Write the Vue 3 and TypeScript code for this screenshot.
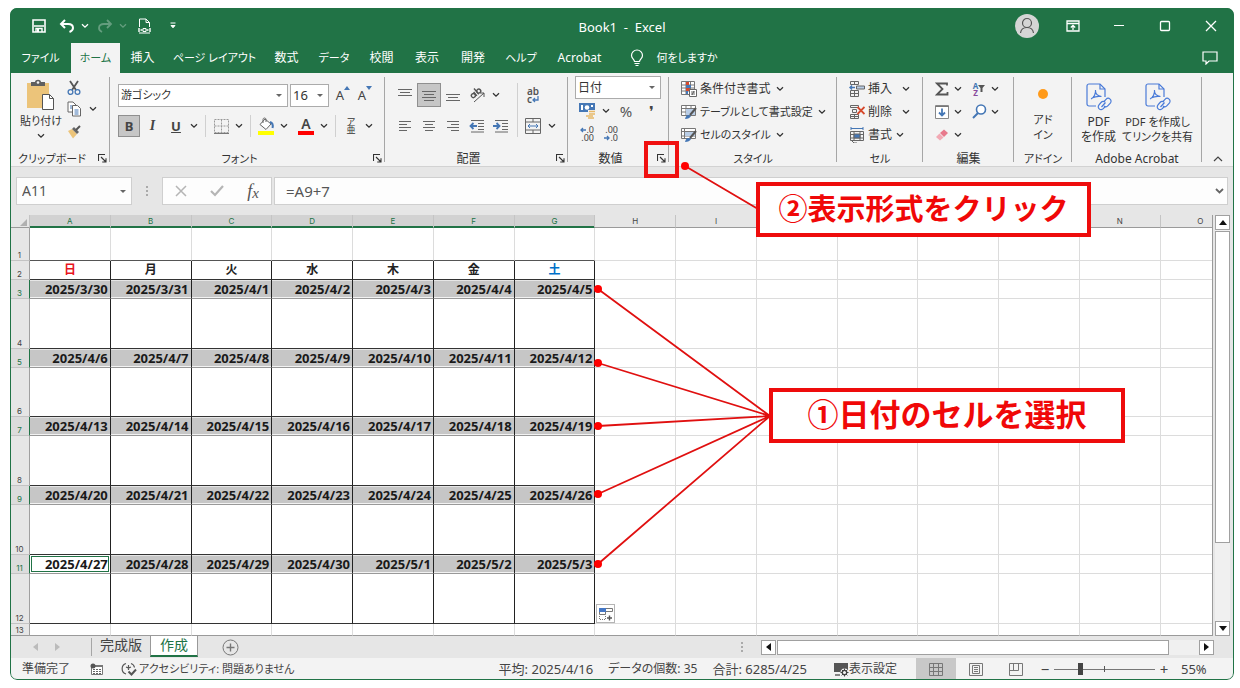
<script setup lang="ts">
import { h, ref } from 'vue'

const Chevron = () =>
  h('svg', { width: 8, height: 6, viewBox: '0 0 8 6', 'aria-hidden': 'true' }, [
    h('path', { d: 'M1 1.2 4 4.2 7 1.2', fill: 'none', stroke: 'currentColor', 'stroke-width': 1.3 }),
  ])

const Launcher = () =>
  h('svg', { width: 9, height: 9, viewBox: '0 0 9 9', 'aria-hidden': 'true' }, [
    h('path', { d: 'M.5 7V.5H7M3 3l5 5M8 4.2V8H4.2', fill: 'none', stroke: '#333', 'stroke-width': 1.1 }),
  ])

const LineIcon = (props: { lines: number[][] }) =>
  h(
    'svg',
    { width: 16, height: 16, viewBox: '0 0 16 16', 'aria-hidden': 'true' },
    props.lines.map(([x, y, w]) => h('rect', { x, y, width: w, height: 1, fill: '#666' })),
  )
LineIcon.props = ['lines']

const PdfIcon = () =>
  h('svg', { width: 28, height: 30, viewBox: '0 0 28 30', fill: 'none', stroke: '#4a7bd8', 'stroke-width': 1.2, 'aria-hidden': 'true' }, [
    h('path', { d: 'M11 24H4a2 2 0 0 1-2-2V4a2 2 0 0 1 2-2h11l5 5v8' }),
    h('path', { d: 'M15 2v5h5' }),
    h('path', { d: 'M6 17c3-1 5-6 4.500-9M10.500 9c0 3 3 5 6 5.500M7 16c3-1.500 6-2 9-1.500' }),
    h('path', { d: 'M19 19.500l2-2.200a2.900 2.900 0 0 1 4.300 3.900L23 23.700a2.900 2.900 0 0 1-4 .3M20.500 20.500l-4 4.500' }),
    h('path', { d: 'M20 20a2.900 2.900 0 0 0-4 .5l-2 2.300a2.900 2.900 0 0 0 4.300 3.900l2-2.200' }),
  ])

interface Tab {
  label: string
  kana?: boolean
}
const tabs: Tab[] = [
  { label: 'ファイル', kana: true },
  { label: 'ホーム', kana: true },
  { label: '挿入' },
  { label: 'ページ レイアウト', kana: true },
  { label: '数式' },
  { label: 'データ', kana: true },
  { label: '校閲' },
  { label: '表示' },
  { label: '開発' },
  { label: 'ヘルプ', kana: true },
  { label: 'Acrobat' },
]
const columns = ['A', 'B', 'C', 'D', 'E', 'F', 'G', 'H', 'I', '', '', '', '', 'N', 'O']
const days = ['日', '月', '火', '水', '木', '金', '土']

interface Row {
  n: number
  kind: 'blank' | 'days' | 'dates' | 'space'
  size: string
  cells: string[]
}

const start = Date.UTC(2025, 2, 30)
function week(index: number): string[] {
  return days.map((_, d) => {
    const date = new Date(start + (index * 7 + d) * 86400000)
    return `${date.getUTCFullYear()}/${date.getUTCMonth() + 1}/${date.getUTCDate()}`
  })
}

const rows: Row[] = [
  { n: 1, kind: 'blank', size: 'r33', cells: [] },
  { n: 2, kind: 'days', size: 'r19', cells: days },
]
for (let w = 0; w < 5; w++) {
  rows.push({ n: 3 + w * 2, kind: 'dates', size: 'r19', cells: week(w) })
  rows.push({ n: 4 + w * 2, kind: 'space', size: w === 1 ? 'r49' : 'r50', cells: [] })
}
rows.push({ n: 13, kind: 'blank', size: 'r12', cells: [] })

const zoom = ref(55)
const formula = ref('=A9+7')
const cellName = ref('A11')

const alignTop = [[1, 2, 14], [3, 5, 10], [1, 8, 14]]
const alignMid = [[1, 4, 14], [3, 7, 10], [1, 10, 14], [3, 13, 10]]
const alignBottom = [[1, 7, 14], [3, 10, 10], [1, 13, 14]]
const alignLeft = [[2, 3, 12], [2, 6, 8], [2, 9, 12], [2, 12, 8]]
const alignCenter = [[2, 3, 12], [4, 6, 8], [2, 9, 12], [4, 12, 8]]
const alignRight = [[2, 3, 12], [6, 6, 8], [2, 9, 12], [6, 12, 8]]
</script>

<template>
  <div class="window">
    <header class="titlebar">
      <div class="quick">
        <button class="qb" aria-label="上書き保存">
          <svg width="14" height="14" viewBox="0 0 14 14"><path d="M1 1h12v12H1z" fill="none" stroke="#fff" stroke-width="1.600"/><path d="M2 7h10M4 13V9.500h6V13" fill="none" stroke="#fff" stroke-width="1.400"/><path d="M5 10h2v3H5z" fill="#fff"/></svg>
        </button>
        <button class="qb undo" aria-label="元に戻す">
          <svg width="16" height="14" viewBox="0 0 16 14"><path d="M6 1 2 5l4 4M2.500 5H9c3 0 5 1.500 5 4 0 1.500-1 3-3.500 4" fill="none" stroke="#fff" stroke-width="2"/></svg>
          <Chevron />
        </button>
        <button class="qb undo faded" aria-label="やり直し">
          <svg width="16" height="14" viewBox="0 0 16 14"><path d="M10 1l4 4-4 4M13.500 5H7C4 5 2 6.500 2 9c0 1.500 1 3 3 4" fill="none" stroke="#fff" stroke-width="1.800"/></svg>
          <Chevron />
        </button>
        <button class="qb print" aria-label="印刷プレビュー">
          <svg width="13" height="16" viewBox="0 0 13 16" fill="none" stroke="#fff"><path d="M1.500 9V1h6.500l3.500 3.500V9M8 1v3.500h3.500M1 15h11"/><path d="M1 10v4M12 10v4M2.500 12h2M8.500 12h2" stroke-width="1.400"/><path d="M5 10.500h3v3H5z"/></svg>
        </button>
        <button class="qb more" aria-label="クイック アクセス ツール バーのカスタマイズ">
          <svg width="6" height="7" viewBox="0 0 6 7"><path d="M.5 1h5M1 3.500h4L3 5.800z" stroke="#fff" fill="#fff"/></svg>
        </button>
      </div>
      <h1>Book1&nbsp; -&nbsp; Excel</h1>
      <div class="system">
        <button class="avatar" aria-label="アカウント">
          <svg width="16" height="18" viewBox="0 0 16 18" fill="none" stroke="#555" stroke-width="1.200"><circle cx="8" cy="6" r="4.500"/><path d="M1.500 16c.5-4 3-5.500 6.500-5.500s6 1.500 6.500 5.500"/></svg>
        </button>
        <button aria-label="リボンの表示オプション">
          <svg width="14" height="12" viewBox="0 0 14 12" fill="none" stroke="#fff" stroke-width="1.300"><path d="M1 1h12v10H1zM1 3.500h12M7 10V5.500M4.800 7.500 7 5.300l2.200 2.200"/></svg>
        </button>
        <button aria-label="最小化"><svg width="12" height="12" viewBox="0 0 12 12"><path d="M1 5.500h10" stroke="#fff" stroke-width="1.200"/></svg></button>
        <button aria-label="最大化"><svg width="12" height="12" viewBox="0 0 12 12"><rect x="1.500" y="1.500" width="9" height="9" rx="1" fill="none" stroke="#fff" stroke-width="1.300"/></svg></button>
        <button aria-label="閉じる"><svg width="12" height="12" viewBox="0 0 12 12"><path d="M1 1l10 10M11 1 1 11" stroke="#fff" stroke-width="1.300"/></svg></button>
      </div>
    </header>

    <nav class="tabs">
      <button v-for="t in tabs" :key="t.label" :class="{ on: t.label === 'ホーム', kana: t.kana }">{{ t.label }}</button>
      <button class="ask kana">
        <svg width="14" height="18" viewBox="0 0 14 18" fill="none" stroke="#fff" stroke-width="1.200"><path d="M4.500 12.500c0-2-3-3-3-6a5.500 5.500 0 0 1 11 0c0 3-3 4-3 6zM4.500 14.500h5M5.500 16.500h3"/></svg>
        何をしますか
      </button>
      <button class="comment" aria-label="コメント">
        <svg width="16" height="14" viewBox="0 0 16 14" fill="none" stroke="#fff" stroke-width="1.200"><path d="M1 1h14v9H7l-3 3v-3H1z"/></svg>
      </button>
    </nav>

    <section class="ribbon">
      <!-- Clipboard -->
      <div class="group">
        <div class="body clip">
          <button class="paste">
            <svg width="30" height="32" viewBox="0 0 30 32"><path d="M1 4h22v25H1z" fill="#ecc47a"/><path d="M5 7V3h4c0-3 6-3 6 0h4v4z" fill="#5f5f5f"/><circle cx="12" cy="3.500" r="1.300" fill="#f3f3f3"/><path d="M16.500 15.500h7l4 4V30.500h-11z" fill="#fff" stroke="#555"/><path d="M23.500 15.500v4h4" fill="none" stroke="#555"/></svg>
            <span class="kana">貼り付け</span>
            <Chevron />
          </button>
          <div class="stack">
            <button aria-label="切り取り">
              <svg width="14" height="16" viewBox="0 0 14 16" fill="none"><path d="M3 1l6 9M11 1 5 10" stroke="#555" stroke-width="1.800"/><circle cx="3.500" cy="12" r="2.400" stroke="#4577b5" stroke-width="1.300"/><circle cx="10.500" cy="12" r="2.400" stroke="#4577b5" stroke-width="1.300"/></svg>
            </button>
            <button aria-label="コピー">
              <svg width="14" height="16" viewBox="0 0 14 16" fill="#fff" stroke="#666"><path d="M1 1h5l3 3v7H1z"/><path d="M5.500 4.500h5l3 3v7.500h-8z"/><path d="M3 5h2M3 7h2M7.500 9h4M7.500 11h4M7.500 13h4" stroke="#4577b5"/></svg>
              <Chevron />
            </button>
            <button aria-label="書式のコピー/貼り付け">
              <svg width="15" height="14" viewBox="0 0 15 14"><path d="M1 6l4-2 5 5-4 4.500z" fill="#ecc47a"/><path d="M5 4l2-2 5 5-2 2z" fill="#666"/><path d="M9 5l4-4" stroke="#555" stroke-width="2"/></svg>
            </button>
          </div>
        </div>
        <div class="caption"><span class="kana">クリップボード</span><button aria-label="クリップボードの詳細"><Launcher /></button></div>
      </div>

      <!-- Font -->
      <div class="group">
        <div class="body font">
          <div class="row">
            <label class="combo family"><select class="kana" aria-label="フォント名"><option>游ゴシック</option></select><i></i></label>
            <label class="combo size"><select aria-label="フォント サイズ"><option>16</option></select><i></i></label>
            <button class="ib grow" aria-label="フォント サイズの拡大">A<svg width="6" height="4" viewBox="0 0 6 4"><path d="M0 4l3-4 3 4z" fill="#4577b5"/></svg></button>
            <button class="ib grow" aria-label="フォント サイズの縮小">A<svg width="6" height="4" viewBox="0 0 6 4"><path d="M0 0h6L3 4z" fill="#4577b5"/></svg></button>
          </div>
          <div class="row">
            <button class="ib pressed"><b>B</b></button>
            <button class="ib wide"><b class="ital">I</b></button>
            <button class="ib"><b class="under">U</b></button>
            <button class="cb" aria-label="下線の種類"><Chevron /></button>
            <span class="sep"></span>
            <button class="ib" aria-label="罫線"><svg width="15" height="15" viewBox="0 0 15 15" fill="none" stroke="#999"><path d="M.5.5h14v13H.5zM7.500.5v13M.5 7h14" stroke-dasharray="2 1"/><path d="M0 14.500h15" stroke="#777"/></svg></button>
            <button class="cb" aria-label="罫線の種類"><Chevron /></button>
            <span class="sep"></span>
            <button class="ib" aria-label="塗りつぶしの色"><svg width="18" height="18" viewBox="0 0 18 18"><path d="M8 2l6 5-5 5.500-6-5z" fill="#fff" stroke="#666"/><path d="M6 6V2.500C6 .5 9 .5 9 2.500V5" fill="none" stroke="#666"/><path d="M13 5c3 1 3 4 2.500 6" fill="none" stroke="#4577b5" stroke-width="2"/><path d="M1 14h16v4H1z" fill="#ff0"/></svg></button>
            <button class="cb" aria-label="塗りつぶしの色を選択"><Chevron /></button>
            <button class="ib fontcolor" aria-label="フォントの色">A</button>
            <button class="cb" aria-label="フォントの色を選択"><Chevron /></button>
            <span class="sep"></span>
            <button class="ib ruby"><span>ア</span><span>亜</span></button>
            <button class="cb" aria-label="ふりがなの設定"><Chevron /></button>
          </div>
        </div>
        <div class="caption"><span class="kana">フォント</span><button aria-label="フォントの設定"><Launcher /></button></div>
      </div>

      <!-- Alignment -->
      <div class="group">
        <div class="body align">
          <div class="rows">
            <div class="row">
              <button class="ac" aria-label="上揃え"><LineIcon :lines="alignTop" /></button>
              <button class="ac pressed" aria-label="上下中央揃え"><LineIcon :lines="alignMid" /></button>
              <button class="ac" aria-label="下揃え"><LineIcon :lines="alignBottom" /></button>
              <button class="ac" aria-label="方向"><svg width="17" height="16" viewBox="0 0 17 16" fill="none" stroke="#555"><g transform="rotate(-40 7 7)" stroke-width="1.400"><circle cx="4" cy="6.500" r="2"/><path d="M6.500 4v5M9 1.500V9"/><circle cx="11" cy="6.500" r="2"/></g><path d="M5 15 15 6M15 10V6h-4"/></svg></button>
              <button class="cb" aria-label="方向の種類"><Chevron /></button>
            </div>
            <div class="row">
              <button class="ac" aria-label="左揃え"><LineIcon :lines="alignLeft" /></button>
              <button class="ac" aria-label="中央揃え"><LineIcon :lines="alignCenter" /></button>
              <button class="ac" aria-label="右揃え"><LineIcon :lines="alignRight" /></button>
              <button class="ac" aria-label="インデントを減らす"><svg width="16" height="14" viewBox="0 0 16 14"><path d="M2 1.500h13M9 4.500h6M9 7.500h6M9 10.500h6M2 13h13" stroke="#666"/><path d="M8 7H1.500M4.500 4 1.500 7l3 3" fill="none" stroke="#4577b5" stroke-width="1.800"/></svg></button>
              <button class="ac" aria-label="インデントを増やす"><svg width="16" height="14" viewBox="0 0 16 14"><path d="M2 1.500h13M9 4.500h6M9 7.500h6M9 10.500h6M2 13h13" stroke="#666"/><path d="M0 7h6.500M3.500 4l3 3-3 3" fill="none" stroke="#4577b5" stroke-width="1.800"/></svg></button>
            </div>
          </div>
          <span class="vsep"></span>
          <div class="rows">
            <div class="row">
              <button class="ac wrap" aria-label="折り返して全体を表示する">
                <span>ab</span>
                <span>c<svg width="7" height="7" viewBox="0 0 7 7"><path d="M6 0v4H1M3 2 1 4l2 2" fill="none" stroke="#4577b5" stroke-width="1.300"/></svg></span>
              </button>
            </div>
            <div class="row">
              <button class="ac" aria-label="セルを結合して中央揃え"><svg width="16" height="16" viewBox="0 0 16 16" fill="none" stroke="#666"><path d="M.5.5h15v15H.5zM.5 4h15M.5 12h15M8 .5V4M8 12v3.500"/><path d="M3 8h10M5 6 3 8l2 2M11 6l2 2-2 2" stroke="#4577b5"/></svg></button>
              <button class="cb" aria-label="結合の種類"><Chevron /></button>
            </div>
          </div>
        </div>
        <div class="caption"><span>配置</span><button aria-label="配置の設定"><Launcher /></button></div>
      </div>

      <!-- Number -->
      <div class="group">
        <div class="body number">
          <label class="combo format"><select aria-label="数値の書式"><option>日付</option></select><i></i></label>
          <div class="row">
            <button class="nb" aria-label="通貨表示形式"><svg width="17" height="16" viewBox="0 0 17 16"><path d="M0 0h16v9H0z" fill="#4577b5"/><path d="M2 2h2v5H2zM12 2h2v2h-2z" fill="#fff"/><circle cx="8" cy="4.500" r="2.300" fill="#fff"/><path d="M9 7h8v9H6v-4h3z" fill="#f3f3f3"/><path d="M10 8.500h6M10 11h6M7 13h7M9 15h6" stroke="#e8b968" stroke-width="1.500"/></svg></button>
            <button class="cb" aria-label="通貨の種類"><Chevron /></button>
            <button class="nb pct">%</button>
            <button class="nb comma">❜</button>
          </div>
          <div class="row">
            <button class="nb dec" aria-label="小数点以下の表示桁数を増やす">
              <span><svg width="6" height="6" viewBox="0 0 6 6"><path d="M6 3H1M3 1 1 3l2 2" fill="none" stroke="#4577b5" stroke-width="1.300"/></svg>.0</span>
              <span>.00</span>
            </button>
            <button class="nb dec" aria-label="小数点以下の表示桁数を減らす">
              <span>.00</span>
              <span><svg width="6" height="6" viewBox="0 0 6 6"><path d="M0 3h5M3 1l2 2-2 2" fill="none" stroke="#4577b5" stroke-width="1.300"/></svg>.0</span>
            </button>
          </div>
        </div>
        <div class="caption"><span>数値</span><button aria-label="表示形式"><Launcher /></button></div>
      </div>

      <!-- Styles -->
      <div class="group">
        <div class="body list">
          <button>
            <svg width="16" height="16" viewBox="0 0 16 16"><path d="M.5.5h13v13H.5zM5 .5v13M9.500.5v13M.5 4h13M.5 7h13M.5 10h13" fill="#fff" stroke="#777"/><path d="M5 1h3v3H5zM5 7h4v3H5z" fill="#d6492c"/><path d="M5 4h5v3H5zM5 10h2v3H5z" fill="#4577b5"/><path d="M8.500 8.500h7v7h-7z" fill="#fff" stroke="#666"/><path d="M10 11h4M10 13h4M13 10l-2 4" stroke="#444" stroke-width=".8"/></svg>
            条件付き書式<Chevron />
          </button>
          <button class="kana">
            <svg width="16" height="16" viewBox="0 0 16 16"><path d="M.5 1.500h14v10H.5zM.5 4.500h14M.5 8h14M5 1.500v10M10 1.500v10" fill="#fff" stroke="#777"/><path d="M5 5h9v6H5z" fill="#b9cde6"/><path d="M15 4 9 11" stroke="#555" stroke-width="2"/><path d="M4 15c1-4 3-5 6-3-1 2-3 3-6 3z" fill="#4577b5"/></svg>
            テーブルとして書式設定<Chevron />
          </button>
          <button class="kana">
            <svg width="16" height="16" viewBox="0 0 16 16"><path d="M.5 1.500h14v10H.5zM.5 4.500h14M.5 9h14M3.500 1.500v10" fill="#fff" stroke="#777"/><path d="M4 5h10v4H4z" fill="#b9cde6"/><path d="M15 4 9 11" stroke="#555" stroke-width="2"/><path d="M4 15c1-4 3-5 6-3-1 2-3 3-6 3z" fill="#4577b5"/></svg>
            セルのスタイル<Chevron />
          </button>
        </div>
        <div class="caption"><span class="kana">スタイル</span></div>
      </div>

      <!-- Cells -->
      <div class="group">
        <div class="body list cells">
          <button>
            <svg width="16" height="16" viewBox="0 0 16 16" fill="none" stroke="#666"><path d="M1.500.5h8v3h-8zM5.500.5v3M1.500 9.500h8v6h-8zM5.500 9.500v6M1.500 12.500h8"/><path d="M7.500 5h8v3h-8z" fill="#b9cde6"/><path d="M6 6.500H1M3 4.500l-2 2 2 2" stroke="#4577b5" stroke-width="1.400"/></svg>
            挿入<Chevron />
          </button>
          <button>
            <svg width="16" height="16" viewBox="0 0 16 16" fill="none" stroke="#666"><path d="M1.500 1.500h8v2h-8zM3.500 5.500h4v3h-4zM1.500 10.500h8v4h-8zM5.500 10.500v4M1.500 12.500h8"/><path d="M8.500 3l7 7M15.500 3l-7 7" stroke="#d6492c" stroke-width="1.800"/></svg>
            削除<Chevron />
          </button>
          <button class="near">
            <svg width="16" height="16" viewBox="0 0 16 16" fill="none" stroke="#666"><path d="M1.500 4.500h13v9h-13zM5 4.500v9M11 4.500v9M1.500 7.500h13M1.500 11h13M3 14l2 2h3"/><path d="M5 7h6v4H5z" fill="#4577b5"/><path d="M2 1.500h12M2 0v3M14 0v3" stroke="#4577b5"/></svg>
            書式<Chevron />
          </button>
        </div>
        <div class="caption"><span class="kana">セル</span></div>
      </div>

      <!-- Editing -->
      <div class="group">
        <div class="body edit">
          <div>
            <button aria-label="合計"><svg width="14" height="14" viewBox="0 0 14 14"><path d="M12 3.500V1.500H2L7.500 7 2 12.500h10.500V10" fill="none" stroke="#555" stroke-width="1.800"/></svg></button><Chevron />
            <button class="sort" aria-label="並べ替えとフィルター">
              <span class="az"><span>A</span><span>Z</span></span>
              <svg width="7" height="8" viewBox="0 0 7 8"><path d="M0 0h7L4.500 3v4h-2V3z" fill="#555"/></svg>
            </button><Chevron />
          </div>
          <div>
            <button aria-label="フィル"><svg width="14" height="14" viewBox="0 0 14 14"><path d="M.5.5h13v13H.5z" fill="#fff" stroke="#888"/><path d="M.5 1.500h13" stroke="#777"/><path d="M7 3.500v7M4 7.500l3 3 3-3" fill="none" stroke="#4577b5" stroke-width="1.800"/></svg></button><Chevron />
            <button aria-label="検索と選択"><svg width="15" height="15" viewBox="0 0 15 15"><circle cx="9" cy="5.500" r="4.500" fill="#fff" stroke="#4577b5" stroke-width="1.600"/><path d="M6 9l-5 5" stroke="#4577b5" stroke-width="2"/></svg></button><Chevron />
          </div>
          <div>
            <button aria-label="クリア"><svg width="14" height="12" viewBox="0 0 14 12"><path d="M5 4 9 .5 13 4 9 8z" fill="#e8798c"/><path d="M4.500 4.500 8.500 8.500 5 11.500 1 8z" fill="#f2a9b4"/></svg></button><Chevron />
          </div>
        </div>
        <div class="caption"><span>編集</span></div>
      </div>

      <!-- Add-ins -->
      <div class="group">
        <div class="body big">
          <button class="addin kana"><span class="dot"></span><span>アド<br>イン</span></button>
        </div>
        <div class="caption"><span class="kana">アドイン</span></div>
      </div>

      <!-- Acrobat -->
      <div class="group">
        <div class="body big">
          <button class="pdf"><PdfIcon /><span>PDF<br>を作成</span></button>
          <button class="pdf kana"><PdfIcon /><span>PDF を作成し<br>てリンクを共有</span></button>
        </div>
        <div class="caption"><span>Adobe Acrobat</span></div>
      </div>

      <button class="collapse" aria-label="リボンを折りたたむ">
        <svg width="10" height="6" viewBox="0 0 10 6"><path d="M1 5l4-4 4 4" fill="none" stroke="#444" stroke-width="1.200"/></svg>
      </button>
    </section>

    <section class="formula">
      <label class="namebox"><input v-model="cellName" aria-label="名前ボックス"><i></i></label>
      <span class="grip"><i></i><i></i><i></i></span>
      <div class="fx">
        <button aria-label="キャンセル"><svg width="12" height="12" viewBox="0 0 12 12"><path d="M1 1l10 10M11 1 1 11" stroke="#b5b5b5" stroke-width="1.500"/></svg></button>
        <button aria-label="入力"><svg width="14" height="12" viewBox="0 0 14 12"><path d="M1 6l4 4 8-9" fill="none" stroke="#b5b5b5" stroke-width="2.200"/></svg></button>
        <button class="fn"><em>f</em><em class="x">x</em></button>
      </div>
      <label class="expr"><input v-model="formula" aria-label="数式バー"><svg width="9" height="6" viewBox="0 0 9 6"><path d="M1 1l3.500 3.500L8 1" fill="none" stroke="#666" stroke-width="1.800"/></svg></label>
    </section>

    <main class="sheet">
      <div class="gridwrap">
        <table>
          <colgroup>
            <col class="rowhead">
            <col v-for="i in 14" :key="i" class="cell">
            <col>
          </colgroup>
          <thead>
            <tr>
              <th class="corner" aria-label="すべて選択"><svg width="7" height="7" viewBox="0 0 7 7"><path d="M7 0v7H0z" fill="#b0b0b0"/></svg></th>
              <th v-for="(c, i) in columns" :key="i" scope="col" :class="{ sel: i < 7 }">{{ c }}</th>
            </tr>
          </thead>
          <tbody>
            <tr v-for="r in rows" :key="r.n" :class="[r.kind, r.size, 'n' + r.n]">
              <th scope="row">{{ r.n }}</th>
              <td v-for="(c, i) in columns" :key="i" :class="{ cal: i < 7, active: r.n === 11 && i === 0, sun: i === 0, sat: i === 6 }">{{ r.cells[i] }}</td>
            </tr>
          </tbody>
        </table>
        <button class="autofill" aria-label="オートフィル オプション">
          <svg width="16" height="16" viewBox="0 0 16 16"><path d="M1.500 2.500h13v3h-13zM1.500 5.500h6v3h-6z" fill="#fff" stroke="#777"/><path d="M1 2h7v4H1z" fill="#4577c5"/><path d="M1.500 10v3.500h6V10" fill="none" stroke="#777" stroke-dasharray="1 1"/><path d="M9 12h5M11.500 9.500v5" stroke="#555" stroke-width="1.400"/></svg>
        </button>
      </div>
      <div class="vscroll">
        <button aria-label="上へスクロール"><svg width="8" height="5" viewBox="0 0 8 5"><path d="M0 5l4-5 4 5z" fill="#111"/></svg></button>
        <div class="thumb"></div>
        <div class="track"></div>
        <button aria-label="下へスクロール"><svg width="8" height="5" viewBox="0 0 8 5"><path d="M0 0h8L4 5z" fill="#111"/></svg></button>
      </div>
    </main>

    <section class="sheetbar">
      <div class="nav">
        <button aria-label="前のシート"><svg width="5" height="8" viewBox="0 0 5 8"><path d="M5 0v8L0 4z" fill="#bbb"/></svg></button>
        <button aria-label="次のシート"><svg width="5" height="8" viewBox="0 0 5 8"><path d="M0 0v8l5-4z" fill="#bbb"/></svg></button>
      </div>
      <button class="stab">完成版</button>
      <button class="stab on">作成</button>
      <button class="add" aria-label="新しいシート">
        <svg width="17" height="17" viewBox="0 0 17 17" fill="none" stroke="#777"><circle cx="8.500" cy="8.500" r="7.500"/><path d="M8.500 4.500v8M4.500 8.500h8" stroke-width="1.400"/></svg>
      </button>
      <span class="grip"><i></i><i></i><i></i></span>
      <div class="hscroll">
        <button aria-label="左へスクロール"><svg width="5" height="8" viewBox="0 0 5 8"><path d="M5 0v8L0 4z" fill="#111"/></svg></button>
        <div class="thumb"></div>
        <div class="track"></div>
        <button aria-label="右へスクロール"><svg width="5" height="8" viewBox="0 0 5 8"><path d="M0 0v8l5-4z" fill="#111"/></svg></button>
      </div>
    </section>

    <footer class="status">
      <span>準備完了</span>
      <svg class="macro" width="13" height="12" viewBox="0 0 13 12"><path d="M1.500 2.500h11v9h-11z" fill="#fff" stroke="#777"/><path d="M5 2h8v2H5z" fill="#777"/><circle cx="3" cy="3" r="2.500" fill="#555"/><path d="M3 6.500h8M3 8.500h8M3 10.500h8" stroke="#666" stroke-dasharray="2 1"/></svg>
      <button class="a11y kana">
        <svg width="16" height="14" viewBox="0 0 16 14" fill="none" stroke="#555" stroke-width="1.200"><path d="M5 1.500a5.500 5.500 0 0 0 0 10.500M10 1.500a5 5 0 0 1 3.500 4M5 5l2.500 1L10 5M7.500 3v5"/><path d="M7.500 9.500l3 3 4.500-5" stroke-width="2"/></svg>
        アクセシビリティ: 問題ありません
      </button>
      <div class="stats"><span>平均: 2025/4/16</span><span class="count">データの個数: 35</span><span>合計: 6285/4/25</span></div>
      <button class="disp">
        <svg width="16" height="15" viewBox="0 0 16 15"><path d="M1 1h14v9H1z" fill="#555"/><path d="M2 13h5" stroke="#555" stroke-width="1.400"/><circle cx="11.500" cy="10.500" r="4" fill="#f3f3f3"/><circle cx="11.500" cy="10.500" r="2.200" fill="none" stroke="#444" stroke-width="1.300"/><path d="M11.500 6.500v2M11.500 12.500v2M7.500 10.500h2M13.500 10.500h2M8.700 7.700l1.400 1.400M13 12l1.400 1.400M14.400 7.700 13 9.100M10 12l-1.400 1.400" stroke="#444"/></svg>表示設定
      </button>
      <button class="view on" aria-label="標準"><svg width="14" height="13" viewBox="0 0 14 13"><path d="M.5.5h13v12H.5zM.5 4.500h13M.5 8.500h13M4.500 .5v12M9.500.5v12" fill="none" stroke="#777"/></svg></button>
      <button class="view" aria-label="ページ レイアウト"><svg width="14" height="13" viewBox="0 0 14 13"><path d="M.5.5h13v12H.5zM3.500 2.500h7v8h-7zM5 4.500h4M5 6.500h4M5 8.500h4" fill="none" stroke="#777"/></svg></button>
      <button class="view" aria-label="改ページ プレビュー"><svg width="14" height="13" viewBox="0 0 14 13"><path d="M.5.5h13v12H.5zM4.500 .5v7M9.500.5v7M.5 7.500h9" fill="none" stroke="#777"/></svg></button>
      <button class="zoomb">−</button>
      <input v-model.number="zoom" class="slider" type="range" min="10" max="190" aria-label="ズーム">
      <button class="zoomb">+</button>
      <span class="percent">{{ zoom }}%</span>
    </footer>

    <svg class="leaders" aria-hidden="true">
      <path d="M675 158 748 201M588 281 760 408M588 355 760 408M588 418 760 408M588 486 760 408M588 556 760 408" fill="none" stroke="#e01010" stroke-width="1.800"/>
      <g fill="#f00">
        <circle cx="675" cy="158" r="4"/><circle cx="588" cy="281" r="4"/><circle cx="588" cy="355" r="4"/><circle cx="588" cy="418" r="4"/><circle cx="588" cy="486" r="4"/><circle cx="588" cy="556" r="4"/>
      </g>
    </svg>
    <div class="target"></div>
    <p class="callout second">②表示形式をクリック</p>
    <p class="callout first">①日付のセルを選択</p>
  </div>
</template>

<style>
body { background: #fff; }
</style>

<style scoped>
.window {
  position: relative;
  display: flex;
  flex-direction: column;
  margin: 8px 6px 8px 10px;
  border-radius: 7px;
  overflow: hidden;
  background: #e6e6e6;
  color: #333;
  font: 12px/16px "Noto Sans", "Noto Sans CJK JP", sans-serif;
  font-feature-settings: "palt";
}
.window::after {
  content: "";
  position: absolute;
  inset: 0;
  border: 1px solid #217346;
  border-radius: 7px;
  pointer-events: none;
}
button {
  display: inline-flex;
  align-items: center;
  justify-content: center;
  padding: 0;
  border: 0;
  background: none;
  color: inherit;
  font: inherit;
  font-feature-settings: inherit;
  white-space: nowrap;
}
svg { flex: none; }
input, select { font: inherit; color: inherit; font-feature-settings: inherit; }
.kana { font-size: 11px; }

.titlebar {
  display: grid;
  grid-template-columns: 1fr auto 1fr;
  align-items: center;
  height: 35px;
  background: #217346;
  color: #fff;
}
.quick { display: flex; align-items: center; gap: 13px; padding-left: 22px; }
.undo { gap: 6px; }
.faded { opacity: .3; margin-left: -5px; }
.print { margin-left: -2px; }
.more { margin-left: 6px; }
h1 { margin: 0; padding-top: 2px; font: inherit; font-size: 13px; }
.system { display: flex; justify-content: flex-end; }
.system button { width: 46px; height: 32px; }
.system .avatar { width: 24px; height: 24px; margin: 4px 11px 0 0; border-radius: 12px; background: #d5d5d5; }

.tabs {
  display: grid;
  grid-template-columns: 61px 49px 45px 99px 45px 50px 45px 46px 46px 50px 67px 122px 1fr;
  height: 30px;
  background: #217346;
  color: #fff;
}
.tabs .on { background: #f3f3f3; color: #217346; }
.ask { gap: 12px; }
.tabs .comment { justify-self: end; width: 48px; }

.ribbon {
  display: grid;
  grid-template-columns: 100px 275px 183px 101px 168px 86px 91px 58px 130px 1fr;
  height: 94px;
  box-sizing: border-box;
  border-bottom: 1px solid #d2d2d2;
  background: #f3f3f3;
}
.group { position: relative; display: flex; flex-direction: column; }
.group::after {
  content: "";
  position: absolute;
  top: 4px;
  right: 0;
  bottom: 4px;
  width: 1px;
  background: #a6a6a6;
}
.body { flex: 1; }
.caption { display: flex; height: 16px; line-height: 18px; text-align: center; }
.caption span { flex: 1; white-space: nowrap; }
.caption button { width: 16px; }
.row { display: flex; align-items: center; }

.clip { display: flex; padding: 6px 0 0 10px; }
.paste { flex-direction: column; justify-content: flex-start; width: 42px; }
.paste svg:first-child { margin-bottom: 2px; }
.paste span { margin-bottom: 4px; }
.stack { display: flex; flex-direction: column; margin-left: 5px; }
.stack button { height: 23px; gap: 8px; justify-content: flex-start; align-items: center; }
.stack button:first-child { height: 18px; }
.stack button:last-child { height: 24px; }

.font { padding: 10px 0 0 8px; }
.font .row { height: 24px; margin-bottom: 7px; }
.combo { position: relative; display: block; box-sizing: border-box; height: 23px; border: 1px solid #ababab; background: #fff; }
.combo select { width: 100%; height: 100%; padding: 0 2px; border: 0; background: none; appearance: none; outline: 0; }
.combo i, .namebox i {
  position: absolute;
  top: 9px;
  right: 5px;
  border: 3px solid transparent;
  border-top-color: #666;
  border-bottom: 0;
  pointer-events: none;
}
.family { width: 170px; }
.size { width: 39px; margin: 0 3px 0 2px; font-size: 13px; }
.format { width: 86px; }
.grow { font-size: 13px; color: #444; }
.grow svg { align-self: flex-start; margin-top: 2px; }
.ib { width: 22px; height: 22px; }
.ib.wide { width: 25px; }
.ib b { font-size: 13px; color: #444; }
.pressed { box-sizing: border-box; border: 1px solid #8f8f8f; background: #c6c6c6; }
.ib .ital { font-family: "Liberation Serif", serif; font-style: italic; font-size: 14px; }
.under { text-decoration: underline; }
.cb { width: 14px; height: 22px; }
.sep { width: 1px; height: 22px; margin: 0 4px; background: #d0d0d0; }
.fontcolor { box-sizing: border-box; width: 16px; height: 17px; margin: 0 3px 0 7px; border-bottom: 4px solid #f00; font-weight: 600; font-size: 14px; line-height: 14px; color: #444; }
.ruby { flex-direction: column; font-size: 9px; line-height: 8px; }

.align { display: flex; gap: 3px; padding: 10px 0 0 8px; }
.rows { display: flex; flex-direction: column; gap: 7px; }
.rows .row { height: 24px; }
.ac { width: 24px; height: 24px; }
.wrap { flex-direction: column; align-items: flex-start; padding-left: 6px; font-size: 10px; font-weight: 600; line-height: 8px; color: #555; }
.vsep { width: 1px; height: 54px; margin: 0 0 0 1px; background: #d0d0d0; }

.number { padding: 3px 0 0 7px; }
.number .row { height: 23px; }
.nb { width: 24px; height: 22px; }
.nb.pct { width: 26px; font-size: 15px; color: #555; }
.nb.comma { font-size: 15px; color: #444; }
.dec { flex-direction: column; font-size: 9px; line-height: 8px; color: #444; }
.dec span { width: 14px; text-align: right; }

.list { display: flex; flex-direction: column; padding: 4px 0 0 12px; }
.list button { justify-content: flex-start; height: 23px; gap: 3px; }
.list button svg:last-child { margin-left: 2px; }
.cells button svg:last-child { margin-left: 7px; }
.cells .near svg:last-child { margin-left: 1px; }

.edit { padding: 4px 0 0 7px; }
.edit div { display: flex; align-items: center; height: 23px; }
.edit button { width: 24px; height: 22px; }
.edit button:nth-of-type(2) { margin-left: 5px; }
.sort .az { display: flex; flex-direction: column; font-size: 8px; font-weight: 700; line-height: 7px; color: #4577b5; }
.sort .az span:last-child { color: #8a4a9c; }

.big { display: flex; justify-content: center; padding-top: 7px; }
.big button { flex-direction: column; justify-content: flex-start; }
.big .dot { width: 10px; height: 10px; margin: 9px 0 13px; border-radius: 5px; background: #ff9a1a; }
.big span { line-height: 15px; }
.pdf { gap: 2px; margin: 2px 3px 0; }
.collapse { align-self: end; justify-self: center; height: 14px; }

.formula { display: flex; align-items: center; height: 28px; padding: 10px 6px; font-size: 15px; color: #555; }
.namebox, .fx, .expr { position: relative; box-sizing: border-box; display: flex; align-items: center; height: 28px; border: 1px solid #cfcfcf; background: #fdfdfd; }
.namebox { width: 116px; }
.namebox i { top: 12px; }
.namebox input { width: 80px; padding: 2px 5px; border: 0; background: none; outline: 0; font-size: 14px; }
.grip { display: flex; flex-direction: column; gap: 2px; align-items: center; width: 30px; }
.grip i { width: 2px; height: 2px; background: #aaa; }
.fx { width: 110px; margin-right: 2px; }
.fx button { flex: 1; }
.fn { font: 18px/20px "Liberation Serif", serif; }
.fn .x { font-size: 15px; padding-top: 3px; }
.expr { flex: 1; padding-right: 3px; }
.expr input { flex: 1; padding: 0 11px; border: 0; background: none; outline: 0; }

.sheet { display: flex; padding-right: 4px; }
.gridwrap { position: relative; flex: 1; border-right: 1px solid #9a9a9a; }
table { width: 100%; table-layout: fixed; border-collapse: separate; border-spacing: 0; background: #fff; }
col.rowhead { width: 20px; }
col.cell { width: 6.72%; }
th, td { box-sizing: border-box; padding: 0; overflow: hidden; white-space: nowrap; }
thead th { height: 13px; border-right: 1px solid #c4c4c4; border-bottom: 1px solid #9a9a9a; background: #e6e6e6; font: 8px/11px Inter, sans-serif; color: #444; }
thead .sel { border-bottom-color: #217346; box-shadow: inset 0 -1px #217346; background: #d2d2d2; color: #217346; }
thead th:last-child { border-right: 0; padding-left: 28px; }
.corner svg { display: block; margin: 3px 0 0 10px; }
tbody th { border-right: 1px solid #a0a0a0; border-bottom: 1px solid #c4c4c4; background: #e6e6e6; vertical-align: bottom; font: 8px/10px Inter, sans-serif; color: #444; }
td { border-right: 1px solid #dcdcdc; border-bottom: 1px solid #dcdcdc; }
td:last-child { border-right: 0; }
.r33 { height: 33px; }
.r19 { height: 19px; }
.r49 { height: 49px; }
.r50 { height: 50px; }
.r12 { height: 12px; }
.n1 .cal { border-bottom-color: #555; }
.days .cal, .dates .cal, .space .cal { border-right-color: #222; }
.days .cal, .space .cal { border-bottom-color: #333; }
.days td { font-weight: 700; font-size: 12px; line-height: 16px; text-align: center; color: #222; }
.days .sun { color: #e8141c; }
.days .sat { color: #0070c8; }
.dates th { border-right: 1px solid #217346; background: #dcdcdc; color: #217346; }
.dates td { padding-right: 2px; text-align: right; font-weight: 700; font-size: 13px; line-height: 16px; color: #1a1a1a; }
.dates .cal { border-bottom-color: #999; background: #c6c6c6; box-shadow: inset 0 1px #e6e6e6, inset 0 -1px #f2f2f2; }
.dates .active { background: #fff; box-shadow: inset 0 0 0 1px #fff, inset 0 0 0 2px #217346; }
.n13 td, .n13 th { border-bottom-color: #9a9a9a; }
.autofill { position: absolute; left: 586px; bottom: 13px; width: 19px; height: 19px; border: 1px solid #b5b5b5; background: #fff; }
.vscroll { display: flex; flex-direction: column; width: 15px; margin-left: 2px; background: #f0f0f0; }
.vscroll button, .vscroll .thumb, .hscroll button, .hscroll .thumb { box-sizing: border-box; border: 1px solid #a0a0a0; background: #fff; }
.vscroll button { height: 15px; }
.vscroll .thumb { flex: 79; margin-top: 1px; }
.vscroll .track { flex: 20; }

.sheetbar { display: flex; align-items: center; height: 22px; background: #e6e6e6; font-size: 14px; }
.nav { display: flex; gap: 17px; box-sizing: border-box; width: 82px; height: 18px; padding-left: 23px; border-right: 1px solid #a6a6a6; }
.stab { width: 58px; height: 20px; margin-bottom: 4px; color: #444; }
.stab.on { box-sizing: border-box; width: 48px; height: 22px; margin: 0 0 3px; border-right: 1px solid #999; border-left: 1px solid #999; border-bottom: 2px solid #217346; background: #fff; color: #217346; }
.add { margin: 1px 0 0 24px; }
.sheetbar .grip { width: 24px; margin-left: auto; }
.hscroll { display: flex; height: 15px; width: 37%; margin: 0 20px 0 7px; background: #f0f0f0; }
.hscroll button { width: 15px; }
.hscroll .thumb { flex: 396; margin-left: 1px; }
.hscroll .track { flex: 31; }

.status { display: flex; align-items: center; height: 22px; padding-left: 12px; background: #f3f3f3; color: #444; white-space: nowrap; }
.macro { margin: 0 18px 0 20px; }
.a11y { gap: 2px; }
.stats { display: flex; gap: 15px; margin-left: auto; font-size: 13px; }
.stats .count { font-size: 12px; }
.disp { margin: 0 19px 0 26px; }
.view { width: 40px; height: 22px; }
.view.on { background: #c8c8c8; }
.zoomb { width: 18px; font-size: 15px; }
.slider {
  width: 101px;
  height: 14px;
  margin: 0;
  appearance: none;
  background: linear-gradient(#555, #555) 50% 50% / 1px 6px no-repeat, linear-gradient(#777, #777) 0 50% / 100% 1px no-repeat;
}
.slider::-webkit-slider-thumb { appearance: none; width: 5px; height: 12px; background: #444; }
.percent { box-sizing: border-box; width: 61px; padding-left: 8px; font-size: 13px; }

.leaders { position: absolute; top: 0; left: 0; width: 100%; height: 100%; pointer-events: none; }
.target { position: absolute; box-sizing: border-box; top: 133px; left: 634px; width: 35px; height: 37px; border: 4px solid #f01010; pointer-events: none; }
.callout { position: absolute; box-sizing: border-box; margin: 0; height: 55px; border: 4px solid #ee0c0c; background: #fff; color: #f00808; font: 700 29px/42px "Noto Sans CJK JP", sans-serif; font-feature-settings: normal; white-space: nowrap; text-align: center; }
.second { top: 174px; left: 746px; width: 335px; }
.first { top: 380px; left: 759px; width: 356px; font-size: 31px; }
</style>
